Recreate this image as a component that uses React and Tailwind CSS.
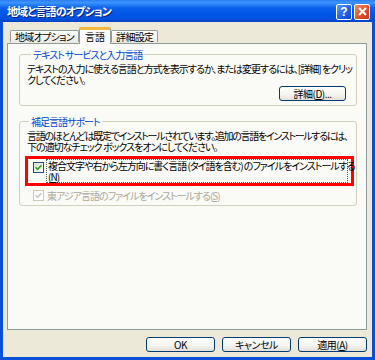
import React from "react";

const font = "font-['Noto_Sans_CJK_JP','Noto_Sans_CJK_SC',sans-serif] [font-feature-settings:'palt']";

function XPButton({ children, className = "" }) {
  return (
    <div
      className={`flex items-center justify-center h-[15px] border border-[#003c74] rounded-[3px] bg-[linear-gradient(to_bottom,#ffffff_0%,#f4f3ee_60%,#e3e0d6_100%)] text-[10px] leading-none text-black tracking-[-0.5px] ${className}`}
    >
      {children}
    </div>
  );
}

function CheckBox({ disabled }) {
  return (
    <div
      className={`w-[11px] h-[11px] shrink-0 border flex items-center justify-center ${
        disabled
          ? "border-[#cac8bb] bg-white"
          : "border-[#1c5180] bg-[linear-gradient(135deg,#dcdcd5,#ffffff)]"
      }`}
    >
      <svg width="7" height="7" viewBox="0 0 7 7">
        <path
          d="M0.5 3.2 L2.6 5.3 L6.5 1.2"
          fill="none"
          stroke={disabled ? "#cac8bb" : "#21a121"}
          strokeWidth="1.6"
        />
      </svg>
    </div>
  );
}

const txt = "text-[10px] leading-[11px] tracking-[-1px] whitespace-nowrap";

export default function App() {
  return (
    <div className={`w-[375px] h-[360px] flex flex-col bg-[#0a4fd8] overflow-hidden ${font}`}>
      {/* Title bar */}
      <div className="h-[22px] shrink-0 flex items-center justify-between pl-[7px] pr-[5px] bg-[linear-gradient(to_bottom,#2a7cf4_0%,#3d95ff_12%,#0b62ec_35%,#0055e5_65%,#0052dc_85%,#0042c6_100%)]">
        <span className="text-white font-bold text-[11px] leading-none tracking-[-0.9px] [text-shadow:1px_1px_0_#0a1f7a]">
          地域と言語のオプション
        </span>
        <div className="flex gap-[2px] pt-[1px]">
          <div className="w-[16px] h-[16px] rounded-[2px] border border-white bg-[linear-gradient(135deg,#5a9bff,#1c5fe6_60%,#1048c8)] flex items-center justify-center text-white font-bold text-[12px] leading-none font-['Liberation_Sans',sans-serif]">
            ?
          </div>
          <div className="w-[16px] h-[16px] rounded-[2px] border border-white bg-[linear-gradient(135deg,#f08d6c,#e0502a_55%,#c3381a)] flex items-center justify-center">
            <svg width="9" height="9" viewBox="0 0 9 9">
              <path d="M1 1 L8 8 M8 1 L1 8" stroke="white" strokeWidth="2" />
            </svg>
          </div>
        </div>
      </div>

      {/* Body */}
      <div className="flex-1 mx-[3px] mb-[3px] bg-[#ece9d8] flex flex-col pl-[4px] pr-[5px]">
        {/* Tabs */}
        <div className="h-[21px] pl-[3px] flex items-end relative z-10">
          <div className="h-[12px] mb-[1px] px-[4px] border border-b-0 border-[#919b9c] rounded-t-[2px] bg-[linear-gradient(to_bottom,#ffffff,#ecebe5)] flex items-center text-[10px] leading-none tracking-[-0.7px] text-black">
            地域オプション
          </div>
          <div className="h-[17px] -mb-[1px] px-[5px] border-x border-[#919b9c] rounded-t-[2px] bg-[#fcfcfe] border-t-[3px] border-t-[#f5b83d] flex items-center text-[10px] leading-none text-black">
            言語
          </div>
          <div className="h-[12px] mb-[1px] px-[4px] border border-b-0 border-[#919b9c] rounded-t-[2px] bg-[linear-gradient(to_bottom,#ffffff,#ecebe5)] flex items-center text-[10px] leading-none tracking-[-0.7px] text-black">
            詳細設定
          </div>
        </div>

        {/* Panel */}
        <div className="h-[287px] min-w-0 border border-[#919b9c] bg-[#fafaf7] pl-[11px] pr-[9px] pt-[5px] flex flex-col gap-[10px]">
          <fieldset className="min-w-0 border border-[#d0d0bf] rounded-[3px] pl-[7px] pr-[10px] pb-[4px]">
            <legend className={`ml-[4px] px-[2px] ${txt} text-[#0046d5]`}>
              テキスト サービスと入力言語
            </legend>
            <div className={`${txt} text-black pt-[3px]`}>
              <div>テキストの入力に使える言語と方式を表示するか、または変更するには、[詳細] をクリッ</div>
              <div>クしてください。</div>
            </div>
            <div className="flex justify-end mt-[1px]">
              <XPButton className="w-[67px]">
                詳細(<span className="underline">D</span>)...
              </XPButton>
            </div>
          </fieldset>

          <fieldset className="min-w-0 border border-[#d0d0bf] rounded-[3px] pl-[5px] pr-[2px] pb-[4px]">
            <legend className={`ml-[4px] px-[2px] ${txt} text-[#0046d5]`}>
              補足言語サポート
            </legend>
            <div className={`pl-[2px] ${txt} text-black pt-[3px]`}>
              <div className="tracking-[-1.3px]">言語のほとんどは既定でインストールされています。追加の言語をインストールするには、</div>
              <div>下の適切なチェック ボックスをオンにしてください。</div>
            </div>
            <div className="mt-[4px] h-[30px] border-[3px] border-[#ff0000] pl-[5px] pr-[3px] flex items-start gap-[2px]">
              <div className="pt-[3px]">
                <CheckBox />
              </div>
              <div className={`flex-1 min-w-0 border border-dotted border-[#555] px-[1px] ${txt} text-black`}>
                <div>複合文字や右から左方向に書く言語 (タイ語を含む) のファイルをインストールする</div>
                <div>
                  (<span className="underline">N</span>)
                </div>
              </div>
            </div>
            <div className="mt-[4px] pl-[8px] flex items-center gap-[3px]">
              <CheckBox disabled />
              <div className={`${txt} text-[#aca899]`}>
                東アジア言語のファイルをインストールする(<span className="underline">S</span>)
              </div>
            </div>
          </fieldset>
        </div>

        {/* Buttons */}
        <div className="flex justify-end gap-[7px] mt-[7px]">
          <XPButton className="w-[69px]">OK</XPButton>
          <XPButton className="w-[69px]">キャンセル</XPButton>
          <XPButton className="w-[69px]">
            適用(<span className="underline">A</span>)
          </XPButton>
        </div>
      </div>
    </div>
  );
}
